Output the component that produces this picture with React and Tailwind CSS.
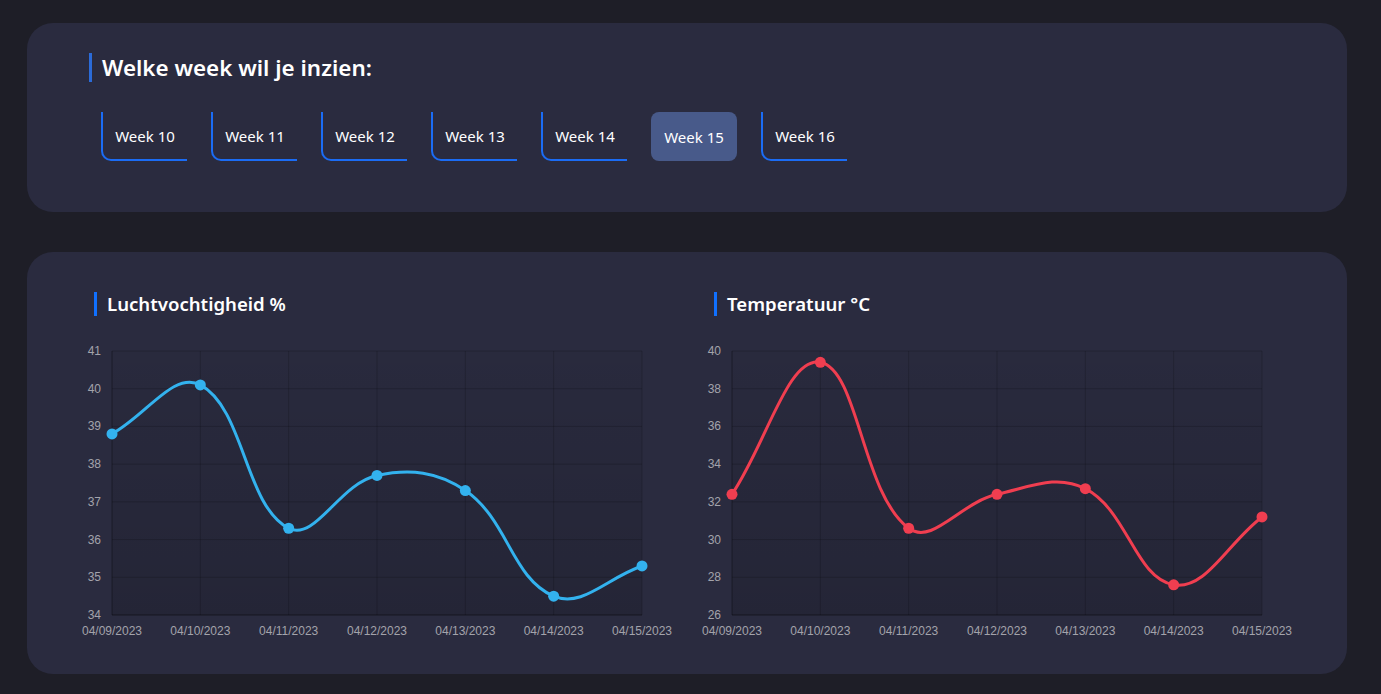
import React from "react";

const dates = ["04/09/2023","04/10/2023","04/11/2023","04/12/2023","04/13/2023","04/14/2023","04/15/2023"];

function controlPoints(pts, t = 0.4) {
  return pts.map((cur, i) => {
    const prev = pts[i - 1] || cur;
    const next = pts[i + 1] || cur;
    const d01 = Math.hypot(cur.x - prev.x, cur.y - prev.y);
    const d12 = Math.hypot(next.x - cur.x, next.y - cur.y);
    let s01 = d01 / (d01 + d12);
    let s12 = d12 / (d01 + d12);
    if (isNaN(s01)) s01 = 0;
    if (isNaN(s12)) s12 = 0;
    const fa = t * s01;
    const fb = t * s12;
    return {
      cp1: { x: cur.x - fa * (next.x - prev.x), y: cur.y - fa * (next.y - prev.y) },
      cp2: { x: cur.x + fb * (next.x - prev.x), y: cur.y + fb * (next.y - prev.y) },
    };
  });
}

function Chart({ data, min, max, step, color, gid }) {
  const left = 32, right = 562, top = 11, bottom = 275;
  const w = right - left, h = bottom - top;
  const pts = data.map((v, i) => ({
    x: left + (i * w) / (data.length - 1),
    y: bottom - ((v - min) / (max - min)) * h,
  }));
  const cps = controlPoints(pts);
  let d = `M ${pts[0].x} ${pts[0].y}`;
  for (let i = 1; i < pts.length; i++) {
    const a = cps[i - 1].cp2, b = cps[i].cp1;
    d += ` C ${a.x} ${a.y} ${b.x} ${b.y} ${pts[i].x} ${pts[i].y}`;
  }
  const ticks = [];
  for (let v = min; v <= max + 0.001; v += step) ticks.push(v);
  return (
    <svg width="620" height="300" className="block overflow-visible">
      <defs>
        <linearGradient id={gid} x1="0" y1="0" x2="0" y2="1">
          <stop offset="0" stopColor="#000" stopOpacity="0.03" />
          <stop offset="1" stopColor="#000" stopOpacity="0.14" />
        </linearGradient>
      </defs>
      <rect x={left} y={top} width={w} height={h} fill={`url(#${gid})`} />
      {ticks.map((v) => {
        const y = bottom - ((v - min) / (max - min)) * h;
        return (
          <g key={v}>
            <line x1={left} x2={right} y1={y} y2={y} stroke="rgba(0,0,0,0.17)" strokeWidth="1" />
            <text x={left - 11} y={y + 4} textAnchor="end" fontSize="12" fill="#a3a3ab" fontFamily="'Liberation Sans', Arial, sans-serif">{v}</text>
          </g>
        );
      })}
      {pts.map((p, i) => (
        <g key={i}>
          <line x1={p.x} x2={p.x} y1={top} y2={bottom} stroke={i === 0 ? "rgba(0,0,0,0.35)" : "rgba(0,0,0,0.17)"} strokeWidth="1" />
          <text x={p.x} y={295} textAnchor="middle" fontSize="12" fill="#a3a3ab" fontFamily="'Liberation Sans', Arial, sans-serif">{dates[i]}</text>
        </g>
      ))}
      <line x1={left} x2={right} y1={bottom} y2={bottom} stroke="rgba(0,0,0,0.3)" strokeWidth="1" />
      <path d={d} fill="none" stroke={color} strokeWidth="3" strokeLinecap="round" />
      {pts.map((p, i) => (
        <circle key={i} cx={p.x} cy={p.y} r="5.5" fill={color} />
      ))}
    </svg>
  );
}

const weeks = [10, 11, 12, 13, 14, 15, 16];

export default function App() {
  return (
    <div className="min-h-[694px] w-full bg-[#1e1e27] pt-[23px] pb-[20px]" style={{ fontFamily: "'Noto Sans', 'Open Sans', sans-serif" }}>
      <div className="ml-[27px] w-[1320px] rounded-[26px] bg-[#2a2b3f] pl-[62px] pt-[30px] pb-[51px]">
        <div className="flex items-center gap-[10px]">
          <div className="h-[29px] w-[3px] bg-[#2b6bd8]" />
          <h1 className="text-[22.4px] font-semibold leading-[29px] text-white">Welke week wil je inzien:</h1>
        </div>
        <div className="ml-[12px] mt-[30px] flex gap-[24px]">
          {weeks.map((w) =>
            w === 15 ? (
              <div key={w} className="flex h-[49px] w-[86px] items-center justify-center rounded-lg bg-[#485a8a] pt-[2px] text-[15px] text-white">
                Week {w}
              </div>
            ) : (
              <div key={w} className="flex h-[49px] w-[86px] items-center justify-center rounded-bl-[10px] border-b-2 border-l-2 border-[#1b6cf5] pt-[2px] text-[15px] text-white">
                Week {w}
              </div>
            )
          )}
        </div>
      </div>

      <div className="ml-[27px] mt-[40px] w-[1320px] rounded-[26px] bg-[#2a2b3f] pl-[53px] pr-[27px] pt-[40px] pb-[34px]">
        <div className="grid grid-cols-2">
          <div>
            <div className="ml-[14px] flex items-center gap-[10px]">
              <div className="h-[24px] w-[3px] bg-[#1070ff]" />
              <h2 className="text-[18.6px] font-semibold leading-[24px] text-white">Luchtvochtigheid %</h2>
            </div>
            <div className="mt-[24px]">
              <Chart data={[38.8, 40.1, 36.3, 37.7, 37.3, 34.5, 35.3]} min={34} max={41} step={1} color="#33b2ee" gid="g1" />
            </div>
          </div>
          <div>
            <div className="ml-[14px] flex items-center gap-[10px]">
              <div className="h-[24px] w-[3px] bg-[#1070ff]" />
              <h2 className="text-[18.6px] font-semibold leading-[24px] text-white">Temperatuur °C</h2>
            </div>
            <div className="mt-[24px]">
              <Chart data={[32.4, 39.4, 30.6, 32.4, 32.7, 27.6, 31.2]} min={26} max={40} step={2} color="#f03e50" gid="g2" />
            </div>
          </div>
        </div>
      </div>
    </div>
  );
}
